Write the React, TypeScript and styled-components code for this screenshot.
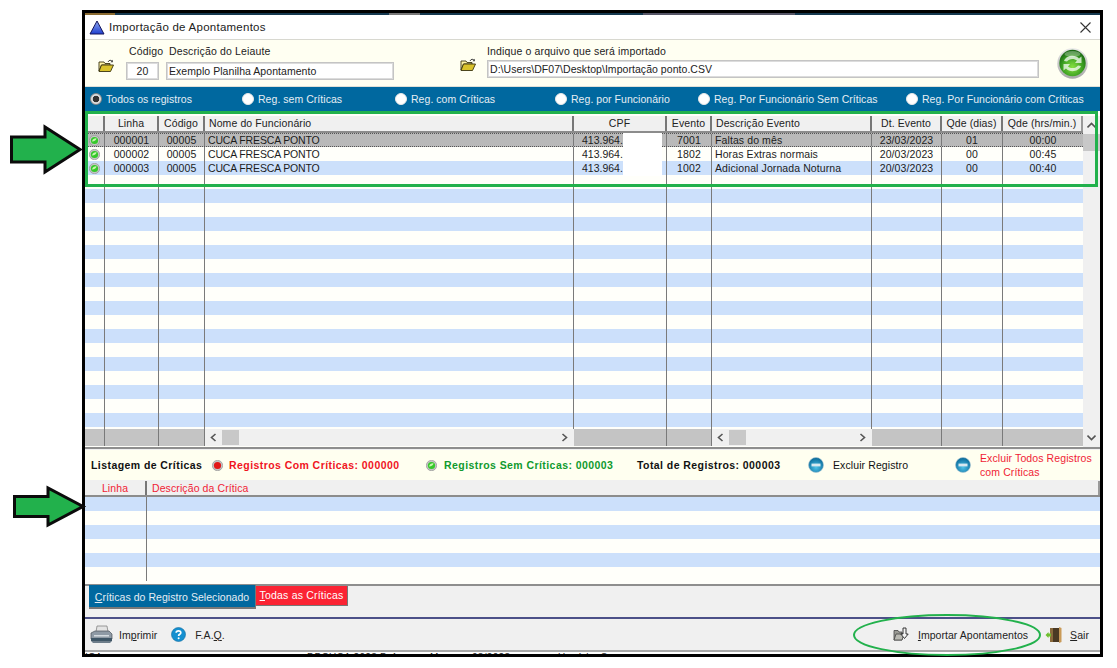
import React from "react";
import styled, { createGlobalStyle } from "styled-components";

const Global = createGlobalStyle`
  html, body { margin: 0; padding: 0; background: #fff; }
  body { font-family: "Liberation Sans", Arial, sans-serif; font-size: 10.5px; color: #111; }
  * { box-sizing: border-box; }
  u { text-underline-offset: 1px; }
`;

const COLS = "20px 54px 46px 369px 93px 45px 160px 70px 61px 80px";

const Page = styled.div`
  position: relative;
  width: 1117px;
  height: 668px;
  overflow: hidden;
  background: #fff;
  padding: 10px 0 0 82px;
`;
const Win = styled.div`
  width: 1021px;
  height: 647px;
  border: 3px solid #000;
  display: flex;
  flex-direction: column;
  background: #f0f0f0;
`;
const TopStrip = styled.div`
  height: 2px;
  flex: none;
  background: linear-gradient(90deg, #8a6a30 0 3%, #14384f 3% 30%, #777 30% 33%, #14384f 33% 55%, #556 55% 70%, #14384f 70% 100%);
`;
const TitleBar = styled.div`
  height: 25px;
  flex: none;
  background: #fff;
  border-bottom: 1px solid #d8d8d0;
  display: flex;
  align-items: center;
  padding: 0 9px 0 4px;
`;
const TitleText = styled.span`
  margin-left: 4px;
  font-size: 11.5px;
  letter-spacing: 0.25px;
  color: #222;
  flex: 1;
`;
const Header = styled.div`
  height: 47px;
  flex: none;
  background: #fffff2;
  display: flex;
  align-items: flex-start;
  padding: 5px 0 0 13px;
  border-bottom: 1px solid #e0e0d8;
`;
const IconSlot = styled.div<{ $left: number; $top: number }>`
  flex: none;
  margin-left: ${(p) => p.$left}px;
  margin-top: ${(p) => p.$top}px;
  display: flex;
`;
const Field = styled.div<{ $w: number; $left: number; $gap: number; $indent?: number }>`
  flex: none;
  width: ${(p) => p.$w}px;
  margin-left: ${(p) => p.$left}px;
  display: flex;
  flex-direction: column;
  gap: ${(p) => p.$gap}px;
  & > label { padding-left: ${(p) => p.$indent ?? 0}px; white-space: nowrap; }
`;
const FieldLabel = styled.label`
  height: 13px;
  line-height: 13px;
  font-size: 10.5px;
  letter-spacing: 0.14px;
  color: #222;
`;
const Input = styled.input<{ $center?: boolean }>`
  width: 100%;
  height: 18px;
  border: 1px solid #c4c4c4;
  outline: 1px solid #dcdcdc;
  outline-offset: -2px;
  background: #fff;
  font: 10.5px "Liberation Sans", Arial, sans-serif;
  letter-spacing: 0.05px;
  color: #222;
  padding: 0 ${(p) => (p.$center ? 0 : 2)}px;
  text-align: ${(p) => (p.$center ? "center" : "left")};
`;
const RadioBar = styled.div`
  height: 24px;
  flex: none;
  background: #00689f;
  display: flex;
  align-items: center;
  padding-left: 5px;
`;
const RadioItem = styled.div<{ $w: number }>`
  flex: none;
  width: ${(p) => p.$w}px;
  display: flex;
  align-items: center;
  gap: 4px;
  color: #e6eef4;
  font-size: 10.5px;
  letter-spacing: 0.04px;
  white-space: nowrap;
`;
const RadioDot = styled.span<{ $on?: boolean }>`
  width: 12px;
  height: 12px;
  border-radius: 50%;
  background: ${(p) => (p.$on ? "radial-gradient(circle, #333 0 3px, #ddd 3.6px)" : "#fff")};
  border: 1px solid ${(p) => (p.$on ? "#888" : "#e8e8e8")};
  flex: none;
`;
const GridWrap = styled.div`
  height: 338px;
  flex: none;
  display: flex;
  background: #fffffa;
  padding-top: 5px;
  border-bottom: 2px solid #8e8e8e;
`;
const GridMain = styled.div`
  width: 998px;
  flex: none;
  display: flex;
  flex-direction: column;
`;
const HeadRow = styled.div<{ $cols: string; $h: number }>`
  display: grid;
  grid-template-columns: ${(p) => p.$cols};
  height: ${(p) => p.$h}px;
  flex: none;
  background: #f0f0f0;
  border-bottom: 2px solid #8c8c8c;
`;
const HeadCell = styled.div<{ $align?: string; $red?: boolean }>`
  line-height: 15px;
  font-size: 10.5px;
  letter-spacing: 0.1px;
  white-space: nowrap;
  overflow: hidden;
  text-align: ${(p) => p.$align ?? "center"};
  color: ${(p) => (p.$red ? "#f01c35" : "#222")};
  padding: 0 ${(p) => (p.$align === "left" ? "3px 0 4px" : "3px")};
  padding-left: ${(p) => (p.$red && p.$align === "left" ? 5 : p.$align === "left" ? 4 : 3)}px;
  border-right: 2px solid #777;
  &:last-child { border-right: 2px solid #999; }
`;
const Rows = styled.div`
  flex: 1;
  min-height: 0;
  overflow: hidden;
  display: flex;
  flex-direction: column;
  position: relative;
`;
const Row = styled.div<{ $kind: "sel" | "white" | "blue"; $cols: string }>`
  display: grid;
  grid-template-columns: ${(p) => p.$cols};
  height: 14px;
  flex: none;
  background: ${(p) => (p.$kind === "sel" ? "#b9b9b9" : p.$kind === "blue" ? "#cce0fb" : "#fffffa")};
  ${(p) => p.$kind === "sel" && "border-top: 1px dotted #555; border-bottom: 1px dotted #555;"}
`;
const Cell = styled.div<{ $align?: string; $tight?: boolean }>`
  display: flex;
  align-items: center;
  justify-content: ${(p) => (p.$align === "center" ? "center" : "flex-start")};
  font-size: 10.5px;
  letter-spacing: ${(p) => (p.$tight ? "-0.15px" : "0.1px")};
  color: #1c1c1c;
  white-space: nowrap;
  overflow: hidden;
  padding-left: ${(p) => (p.$align === "center" ? 0 : 3)}px;
  border-right: 1px solid #7a7a7a;
  &:last-child { border-right: none; }
`;
const CpfCell = styled(Cell)`
  padding-left: 8px;
  letter-spacing: 0;
`;
const Mask = styled.div`
  position: absolute;
  left: 538px;
  top: 0;
  width: 39px;
  height: 43px;
  background: #fff;
`;
const HScroll = styled.div`
  display: grid;
  grid-template-columns: ${COLS};
  height: 17px;
  flex: none;
  margin-bottom: 1px;
`;
const Gray = styled.div`
  background: #c4c4c4;
  border-right: 1px solid #7a7a7a;
  &:last-child { border-right: none; }
`;
const Track = styled.div`
  background: #f0f0f0;
  display: flex;
  align-items: center;
  justify-content: space-between;
  padding: 0 6px 0 5px;
  position: relative;
`;
const Thumb = styled.div`
  position: absolute;
  left: 17px;
  top: 1px;
  width: 17px;
  height: 15px;
  background: #c8c8c8;
`;
const VScroll = styled.div`
  width: 17px;
  flex: none;
  background: #f0f0f0;
  display: flex;
  flex-direction: column;
  align-items: center;
  padding-top: 6px;
`;
const VThumb = styled.div`
  width: 17px;
  height: 17px;
  margin-top: 5px;
  background: #c8c8c8;
`;
const Spring = styled.div`
  flex: 1;
`;
const VDown = styled.div`
  padding-bottom: 6px;
  display: flex;
`;
const CritBar = styled.div`
  height: 30px;
  flex: none;
  margin-top: 1px;
  background: #fffff0;
  display: grid;
  grid-template-columns: 121px 17px 197px 18px 193px 171px 25px 122px 25px 1fr;
  align-items: center;
  padding-left: 6px;
`;
const CritText = styled.span<{ $color?: string; $bold?: boolean }>`
  color: ${(p) => p.$color ?? "#111"};
  font-weight: ${(p) => (p.$bold ? 700 : 400)};
  font-size: 10.5px;
  letter-spacing: ${(p) => (p.$bold ? "0.43px" : "0.1px")};
  line-height: 14px;
  white-space: nowrap;
`;
const CritGrid = styled.div`
  height: 105px;
  flex: none;
  margin-top: 1px;
  background: #fffffa;
  display: flex;
  flex-direction: column;
  border-bottom: 2px solid #8e8e8e;
`;
const CritRow = styled.div<{ $blue: boolean }>`
  display: grid;
  grid-template-columns: 62px 1fr;
  height: 14px;
  flex: none;
  background: ${(p) => (p.$blue ? "#cce0fb" : "#fffffa")};
`;
const CritLine = styled.div`
  border-right: 1px solid #7a7a7a;
`;
const TabsArea = styled.div`
  height: 33px;
  flex: none;
  display: flex;
  align-items: flex-start;
  padding-left: 4px;
  border-bottom: 2px solid #4c5088;
`;
const TabBlue = styled.div`
  width: 167px;
  height: 24px;
  margin-top: -1px;
  background: #00689f;
  color: #e6eef4;
  border-bottom: 2px solid #777;
  border-right: 1px solid #777;
  text-align: center;
  line-height: 25px;
  font-size: 10.5px;
  letter-spacing: 0.05px;
  white-space: nowrap;
`;
const TabRed = styled.div`
  width: 92px;
  height: 20px;
  background: #fb2333;
  color: #fff;
  border-bottom: 1px solid #777;
  border-right: 1px solid #777;
  text-align: center;
  line-height: 18px;
  font-size: 10.5px;
  letter-spacing: 0.2px;
  white-space: nowrap;
`;
const Footer = styled.div`
  height: 31px;
  flex: none;
  display: flex;
  align-items: center;
  padding: 0 11px 0 5px;
  background: #f0f0f0;
`;
const FootText = styled.span<{ $left: number }>`
  margin-left: ${(p) => p.$left}px;
  font-size: 10.5px;
  letter-spacing: 0.05px;
  color: #222;
  white-space: nowrap;
`;
const FootIcon = styled.span<{ $left: number }>`
  margin-left: ${(p) => p.$left}px;
  display: flex;
  flex: none;
`;
const Strip = styled.div`
  height: 2px;
  flex: none;
  background: #fff;
  overflow: hidden;
  display: flex;
  font-size: 10px;
  line-height: 12px;
  letter-spacing: 0.3px;
  color: #222;
  white-space: nowrap;
`;
const StripGray = styled.div`
  height: 2px;
  flex: none;
  background: #a8a8a8;
`;
const StripText = styled.span<{ $w: number }>`
  flex: none;
  width: ${(p) => p.$w}px;
`;
const Overlay = styled.svg<{ $x: number; $y: number }>`
  position: absolute;
  left: ${(p) => p.$x}px;
  top: ${(p) => p.$y}px;
  pointer-events: none;
  overflow: visible;
`;
const Highlight = styled.div`
  position: absolute;
  left: 85px;
  top: 111px;
  width: 1013px;
  height: 76px;
  border: 3px solid #22b14c;
  pointer-events: none;
`;

const Triangle = () => (
  <svg width="16" height="15" viewBox="0 0 16 15">
    <defs>
      <linearGradient id="tri" x1="0" y1="0" x2="0" y2="1">
        <stop offset="0" stopColor="#8fa8f0" />
        <stop offset="1" stopColor="#1f3fd0" />
      </linearGradient>
    </defs>
    <path d="M8 1 L15 14 H1 Z" fill="url(#tri)" stroke="#14145a" strokeWidth="1" />
  </svg>
);
const CloseX = () => (
  <svg width="11" height="11" viewBox="0 0 11 11">
    <path d="M0.5 0.5 L10.5 10.5 M10.5 0.5 L0.5 10.5" stroke="#333" strokeWidth="1.1" />
  </svg>
);
const Folder = () => (
  <svg width="16" height="14" viewBox="0 0 16 14">
    <path d="M1 3 H6 L7 4.5 H12 V6 H3.5 L1 12 Z" fill="#fff4a8" stroke="#3a3410" strokeWidth="0.9" />
    <path d="M3.5 6 H15.5 L12.5 12.5 H1 Z" fill="#d9c22c" stroke="#3a3410" strokeWidth="0.9" />
    <path d="M10 3 C11 0.8 13 0.8 14 2.2" fill="none" stroke="#333" strokeWidth="0.9" />
    <path d="M14.8 0.8 V3.2 H12.6 Z" fill="#333" />
  </svg>
);
const Refresh = () => (
  <svg width="31" height="31" viewBox="0 0 31 31">
    <defs>
      <radialGradient id="rf" cx="0.5" cy="0.65" r="0.6">
        <stop offset="0" stopColor="#86e040" />
        <stop offset="0.65" stopColor="#3c9f22" />
        <stop offset="1" stopColor="#1c6a14" />
      </radialGradient>
      <linearGradient id="rfr" x1="0" y1="0" x2="0" y2="1">
        <stop offset="0" stopColor="#e8e8e8" />
        <stop offset="1" stopColor="#a8a8a8" />
      </linearGradient>
    </defs>
    <circle cx="15.5" cy="15.5" r="15.2" fill="url(#rfr)" />
    <circle cx="15.5" cy="15" r="13.2" fill="url(#rf)" />
    <path d="M7 13 C9 7.5 18 6 22 10.5 L24.5 8.5 L24.5 15 L18 15 L20 12.5 C17 10 12 10.5 10 13.5 Z" fill="#fff" opacity="0.72" />
    <path d="M24 18 C22 23.5 13 25 9 20.5 L6.5 22.5 L6.5 16 L13 16 L11 18.5 C14 21 19 20.5 21 17.5 Z" fill="#fff" opacity="0.72" />
    <ellipse cx="15.5" cy="6" rx="8" ry="3" fill="#fff" opacity="0.3" />
  </svg>
);
const StatusBall = ({ color = "green" }: { color?: "green" | "red" }) => (
  <svg width="11" height="11" viewBox="0 0 11 11" style={{ display: "block" }}>
    <circle cx="5.5" cy="5.5" r="5.2" fill="#c4c4c4" stroke="#8f8f8f" strokeWidth="0.6" />
    <circle cx="5.5" cy="5.5" r="3.6" fill={color === "green" ? "#35c92a" : "#e31818"} />
    {color === "green" && <path d="M3 6.5 C3.5 4 5.5 3 7.5 3.2 C7.5 5 5.5 6.5 3 6.5 Z" fill="#c8f5b0" />}
  </svg>
);
const Chevron = ({ dir }: { dir: "l" | "r" | "u" | "d" }) => {
  const d = {
    l: "M5.5 1 L1.5 4.5 L5.5 8",
    r: "M1.5 1 L5.5 4.5 L1.5 8",
    u: "M0.5 5.5 L4.5 1.5 L8.5 5.5",
    d: "M0.5 1.5 L4.5 5.5 L8.5 1.5",
  }[dir];
  const hor = dir === "l" || dir === "r";
  return (
    <svg width={hor ? 7 : 9} height={hor ? 9 : 7} viewBox={hor ? "0 0 7 9" : "0 0 9 7"}>
      <path d={d} fill="none" stroke="#555" strokeWidth="1.6" />
    </svg>
  );
};
const MinusBall = () => (
  <svg width="16" height="16" viewBox="0 0 16 16" style={{ display: "block" }}>
    <defs>
      <radialGradient id="mb" cx="0.5" cy="0.65" r="0.6">
        <stop offset="0" stopColor="#4fc2e8" />
        <stop offset="1" stopColor="#0b6c9c" />
      </radialGradient>
    </defs>
    <circle cx="8" cy="8" r="7.5" fill="url(#mb)" stroke="#a9c4d2" strokeWidth="0.6" />
    <rect x="3.5" y="6.6" width="9" height="2.8" fill="#d8e8f0" />
  </svg>
);
const Printer = () => (
  <svg width="23" height="19" viewBox="0 0 23 19">
    <path d="M7 1 H17 L18 7 H6 Z" fill="#e4e4e4" stroke="#777" strokeWidth="0.7" />
    <path d="M1 8 L5 6 H19 L22 9 V14 H1 Z" fill="#8f9aa5" stroke="#4a525a" strokeWidth="0.7" />
    <rect x="1" y="13" width="21" height="3" fill="#3f5666" />
    <rect x="4" y="10" width="15" height="1.5" fill="#d5dbe0" />
    <path d="M1 16 H22 L20 18 H3 Z" fill="#6d7d8a" />
  </svg>
);
const Help = () => (
  <svg width="15" height="15" viewBox="0 0 15 15">
    <circle cx="7.5" cy="7.5" r="7" fill="#1690d0" stroke="#0d6a9e" strokeWidth="0.6" />
    <path d="M5.2 5.8 C5.2 3.2 9.8 3.2 9.8 5.7 C9.8 7.4 7.6 7.2 7.6 9" fill="none" stroke="#fff" strokeWidth="1.7" />
    <circle cx="7.6" cy="11.2" r="1" fill="#fff" />
  </svg>
);
const ImportIcon = () => (
  <svg width="16" height="15" viewBox="0 0 16 15">
    <path d="M1 3.5 H5 L6 5 H9 V13 H1 Z" fill="#9a9a94" stroke="#444" strokeWidth="0.8" />
    <path d="M1 13 L3 7 H11 L9 13 Z" fill="#b9b9b2" stroke="#444" strokeWidth="0.8" />
    <path d="M10 1 H13 V7 H15.2 L11.5 11.5 L7.8 7 H10 Z" fill="#f4f4f4" stroke="#222" strokeWidth="0.9" />
  </svg>
);
const Door = () => (
  <svg width="17" height="16" viewBox="0 0 17 16">
    <rect x="5" y="1" width="9" height="14" fill="#4a3a24" />
    <path d="M14 0 L16.5 1 V15 L14 16 Z" fill="#c99a58" />
    <rect x="5" y="1" width="3" height="14" fill="#8a6a3c" />
    <path d="M0.5 8 L3.5 5 V6.6 H6 V9.4 H3.5 V11 Z" fill="#6fbf2f" />
  </svg>
);

const cols: [string, string][] = [
  ["", "center"],
  ["Linha", "center"],
  ["Código", "center"],
  ["Nome do Funcionário", "left"],
  ["CPF", "center"],
  ["Evento", "center"],
  ["Descrição Evento", "left"],
  ["Dt. Evento", "center"],
  ["Qde (dias)", "center"],
  ["Qde (hrs/min.)", "center"],
];
const records = [
  ["000001", "00005", "CUCA FRESCA PONTO", "413.964.", "7001", "Faltas do mês", "23/03/2023", "01", "00:00"],
  ["000002", "00005", "CUCA FRESCA PONTO", "413.964.", "1802", "Horas Extras normais", "20/03/2023", "00", "00:45"],
  ["000003", "00005", "CUCA FRESCA PONTO", "413.964.", "1002", "Adicional Jornada Noturna", "20/03/2023", "00", "00:40"],
];
const radios: [string, number, boolean][] = [
  ["Todos os registros", 152, true],
  ["Reg. sem Críticas", 153, false],
  ["Reg. com Críticas", 160, false],
  ["Reg. por Funcionário", 143, false],
  ["Reg. Por Funcionário Sem Críticas", 208, false],
  ["Reg. Por Funcionário com Críticas", 190, false],
];

const Arrow = ({ x, y, w, h, tail, neck }: { x: number; y: number; w: number; h: number; tail: number; neck: number }) => (
  <Overlay $x={x} $y={y} width={w} height={h} viewBox={`0 0 ${w} ${h}`}>
    <path
      d={`M1.5 ${(h - tail) / 2} H${neck} V2 L${w - 1} ${h / 2} L${neck} ${h - 2} V${(h + tail) / 2} H1.5 Z`}
      fill="#22b14c"
      stroke="#0b0b0b"
      strokeWidth="3"
    />
  </Overlay>
);

export default function App() {
  const rowCount = 22;
  return (
    <Page>
      <Global />
      <Win>
        <TopStrip />
        <TitleBar>
          <Triangle />
          <TitleText>Importação de Apontamentos</TitleText>
          <CloseX />
        </TitleBar>
        <Header>
          <IconSlot $left={0} $top={14}>
            <Folder />
          </IconSlot>
          <Field $w={33} $left={12} $gap={4} $indent={3}>
            <FieldLabel>Código</FieldLabel>
            <Input $center readOnly value="20" />
          </Field>
          <Field $w={228} $left={7} $gap={4} $indent={3}>
            <FieldLabel>Descrição do Leiaute</FieldLabel>
            <Input readOnly value="Exemplo Planilha Apontamento" />
          </Field>
          <IconSlot $left={66} $top={13}>
            <Folder />
          </IconSlot>
          <Field $w={552} $left={11} $gap={2}>
            <FieldLabel>Indique o arquivo que será importado</FieldLabel>
            <Input readOnly value="D:\Users\DF07\Desktop\Importação ponto.CSV" />
          </Field>
          <IconSlot $left={18} $top={3}>
            <Refresh />
          </IconSlot>
        </Header>
        <RadioBar>
          {radios.map(([t, w, on]) => (
            <RadioItem key={t} $w={w}>
              <RadioDot $on={on} />
              {t}
            </RadioItem>
          ))}
        </RadioBar>
        <GridWrap>
          <GridMain>
            <HeadRow $cols={COLS} $h={17}>
              {cols.map(([t, a], i) => (
                <HeadCell key={i} $align={a}>
                  {t}
                </HeadCell>
              ))}
            </HeadRow>
            <Rows>
              {Array.from({ length: rowCount }).map((_, i) => {
                const r = records[i];
                const kind = i === 0 ? "sel" : i % 2 === 0 ? "blue" : "white";
                return (
                  <Row key={i} $kind={kind} $cols={COLS}>
                    <Cell $align="center">{r && <StatusBall />}</Cell>
                    <Cell $align="center">{r?.[0]}</Cell>
                    <Cell $align="center">{r?.[1]}</Cell>
                    <Cell $tight>{r?.[2]}</Cell>
                    <CpfCell>{r?.[3]}</CpfCell>
                    <Cell $align="center">{r?.[4]}</Cell>
                    <Cell>{r?.[5]}</Cell>
                    <Cell $align="center">{r?.[6]}</Cell>
                    <Cell $align="center">{r?.[7]}</Cell>
                    <Cell $align="center">{r?.[8]}</Cell>
                  </Row>
                );
              })}
              <Mask />
            </Rows>
            <HScroll>
              <Gray />
              <Gray />
              <Gray />
              <Track>
                <Chevron dir="l" />
                <Thumb />
                <Chevron dir="r" />
              </Track>
              <Gray />
              <Gray />
              <Track>
                <Chevron dir="l" />
                <Thumb />
                <Chevron dir="r" />
              </Track>
              <Gray />
              <Gray />
              <Gray />
            </HScroll>
          </GridMain>
          <VScroll>
            <Chevron dir="u" />
            <VThumb />
            <Spring />
            <VDown>
              <Chevron dir="d" />
            </VDown>
          </VScroll>
        </GridWrap>
        <CritBar>
          <CritText $bold>Listagem de Críticas</CritText>
          <StatusBall color="red" />
          <CritText $bold $color="#f0141e">
            Registros Com Críticas: 000000
          </CritText>
          <StatusBall />
          <CritText $bold $color="#0f9a2e">
            Registros Sem Críticas: 000003
          </CritText>
          <CritText $bold>Total de Registros: 000003</CritText>
          <MinusBall />
          <CritText>Excluir Registro</CritText>
          <MinusBall />
          <CritText $color="#f01c35">
            Excluir Todos Registros
            <br />
            com Críticas
          </CritText>
        </CritBar>
        <CritGrid>
          <HeadRow $cols="62px 1fr" $h={16}>
            <HeadCell $red>Linha</HeadCell>
            <HeadCell $red $align="left">
              Descrição da Crítica
            </HeadCell>
          </HeadRow>
          {Array.from({ length: 6 }).map((_, i) => (
            <CritRow key={i} $blue={i % 2 === 0}>
              <CritLine />
            </CritRow>
          ))}
        </CritGrid>
        <TabsArea>
          <TabBlue>
            <u>C</u>ríticas do Registro Selecionado
          </TabBlue>
          <TabRed>
            <u>T</u>odas as Críticas
          </TabRed>
        </TabsArea>
        <Footer>
          <FootIcon $left={0}>
            <Printer />
          </FootIcon>
          <FootText $left={6}>
            Im<u>p</u>rimir
          </FootText>
          <FootIcon $left={14}>
            <Help />
          </FootIcon>
          <FootText $left={9}>
            F.A.<u>Q</u>.
          </FootText>
          <Spring />
          <FootIcon $left={0}>
            <ImportIcon />
          </FootIcon>
          <FootText $left={9}>
            <u>I</u>mportar Apontamentos
          </FootText>
          <FootIcon $left={17}>
            <Door />
          </FootIcon>
          <FootText $left={8}>
            <u>S</u>air
          </FootText>
        </Footer>
        <StripGray />
        <Strip>
          <StripText $w={222}>ICA</StripText>
          <StripText $w={123}>DPCUCA 2023 D.4</StripText>
          <StripText $w={42}>M</StripText>
          <StripText $w={86}>03/2023</StripText>
          <StripText $w={200}>Usuário: S</StripText>
        </Strip>
      </Win>
      <Highlight />
      <Arrow x={10} y={125} w={71} h={49} tail={25} neck={35} />
      <Arrow x={13} y={486} w={71} h={41} tail={20} neck={35} />
      <Overlay $x={852} $y={614} width={190} height={42} viewBox="0 0 190 42">
        <ellipse cx="95" cy="21" rx="93" ry="20" fill="none" stroke="#22b14c" strokeWidth="2" />
      </Overlay>
    </Page>
  );
}
